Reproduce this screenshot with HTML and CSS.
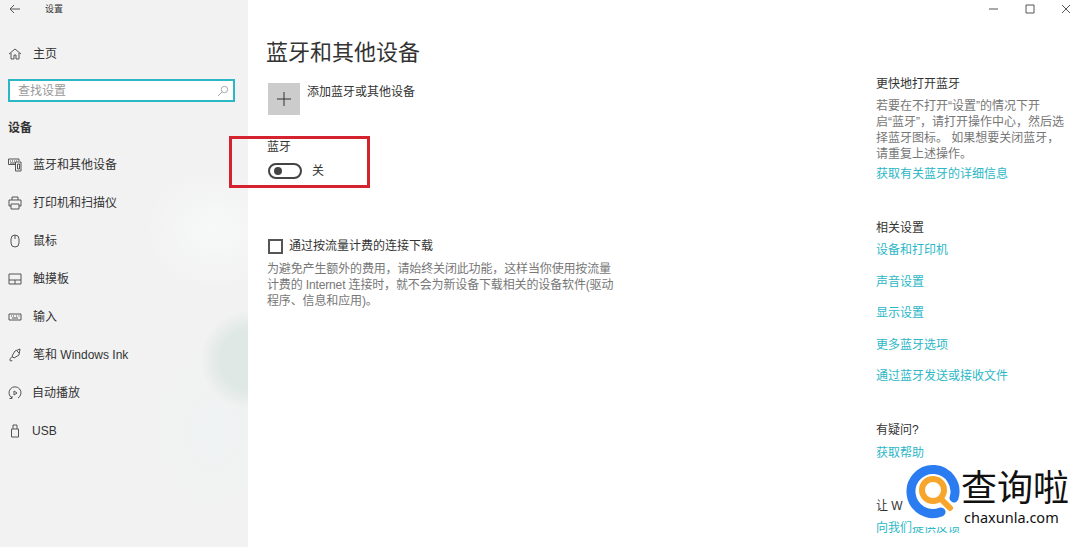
FILE: index.html
```html
<!DOCTYPE html>
<html lang="zh-CN">
<head>
    <meta charset="UTF-8">
    <meta name="viewport" content="width=device-width, initial-scale=1.0">
    <title>设置</title>
    <link rel="stylesheet" href="styles.css">
</head>
<body>
    <div class="app">
        <!-- Left navigation -->
        <aside class="sidebar">
            <div class="titlebar">
                <svg class="back" width="12" height="10" viewBox="0 0 12 10"><path d="M11 5H1M5 1L1 5l4 4"/></svg>
                <span>设置</span>
            </div>
            <a class="home">
                <svg class="icon" viewBox="0 0 14 14"><path d="M1 7l6-5 6 5M3 6v6h3V8h2v4h3V6"/></svg>
                <span>主页</span>
            </a>
            <div class="search">
                <span>查找设置</span>
                <svg width="12" height="12" viewBox="0 0 12 12"><circle cx="7.5" cy="4.5" r="3.2"/><path d="M5 7l-4 4"/></svg>
            </div>
            <h2 class="nav-title">设备</h2>
            <nav>
                <a class="nav-item">
                    <svg class="icon" viewBox="0 0 14 14"><path d="M8 6.500H0.500V1H11v2M2 3h1M4 3h1M6 3h1M8 3h1M2 5h5M7.500 4h5.500v9H7.500zM9.500 6h2v5h-2z"/></svg>
                    <span>蓝牙和其他设备</span>
                </a>
                <a class="nav-item">
                    <svg class="icon" viewBox="0 0 14 14"><path d="M4 4V1h6v3M3 10H1V4h12v6h-2M3 8h8v5H3z"/></svg>
                    <span>打印机和扫描仪</span>
                </a>
                <a class="nav-item">
                    <svg class="icon" viewBox="0 0 14 14"><path d="M3 5a4 4 0 0 1 8 0v4a4 4 0 0 1-8 0zM7 1v4"/></svg>
                    <span>鼠标</span>
                </a>
                <a class="nav-item">
                    <svg class="icon" viewBox="0 0 14 14"><path d="M1 2h12v10H1zM1 8h12M7 8v4"/></svg>
                    <span>触摸板</span>
                </a>
                <a class="nav-item">
                    <svg class="icon" viewBox="0 0 14 14"><path d="M1 4h12v6H1zM3 6h1M5 6h1M8 6h1M10.500 6h1M4 8h6"/></svg>
                    <span>输入</span>
                </a>
                <a class="nav-item">
                    <svg class="icon" viewBox="0 0 14 14"><path d="M12 1L7 3 4 8l2 2 5-3zM9 3l2 2M5 9c-2 0-3 1-3 3 0 1.500 2 1.500 2 0"/></svg>
                    <span>笔和 Windows Ink</span>
                </a>
                <a class="nav-item tight-label">
                    <svg class="icon" viewBox="0 0 14 14"><path d="M4 12a6 6 0 1 1 6 0M4 10v2.500H1.500M6 5l3 2-3 2z"/></svg>
                    <span>自动播放</span>
                </a>
                <a class="nav-item tight-label">
                    <svg class="icon" viewBox="0 0 14 14"><path d="M3.500 5h7v8h-7zM5 5V1h4v4M6 3h0M8 3h0"/></svg>
                    <span>USB</span>
                </a>
            </nav>
        </aside>

        <div class="content">
            <div class="window-controls">
                <svg width="10" height="10" viewBox="0 0 10 10"><path d="M0 5h9"/></svg>
                <svg width="10" height="10" viewBox="0 0 10 10"><path d="M1 1h8v8H1z"/></svg>
                <svg width="10" height="10" viewBox="0 0 10 10"><path d="M1 1l8 8M9 1l-8 8"/></svg>
            </div>
            <div class="columns">
                <main class="main">
                    <h1>蓝牙和其他设备</h1>
                    <div class="add-row">
                        <div class="add-tile">
                            <svg width="14" height="14" viewBox="0 0 14 14"><path d="M7 0v14M0 7h14"/></svg>
                        </div>
                        <span>添加蓝牙或其他设备</span>
                    </div>
                    <div class="bt-label">蓝牙</div>
                    <div class="toggle-row">
                        <div class="toggle"><div class="knob"></div></div>
                        <span>关</span>
                    </div>
                    <div class="check-row">
                        <div class="checkbox"></div>
                        <span>通过按流量计费的连接下载</span>
                    </div>
                    <p class="hint">为避免产生额外的费用，请始终关闭此功能，这样当你使用按流量<br>计费的 Internet 连接时，就不会为新设备下载相关的设备软件(驱动<br>程序、信息和应用)。</p>
                </main>

                <aside class="related">
                    <h3>更快地打开蓝牙</h3>
                    <p>若要在不打开“设置”的情况下开<br>启“蓝牙”，请打开操作中心，然后选<br>择蓝牙图标。 如果想要关闭蓝牙，<br>请重复上述操作。</p>
                    <a class="link first">获取有关蓝牙的详细信息</a>

                    <h3 class="group">相关设置</h3>
                    <a class="link tight">设备和打印机</a>
                    <a class="link">声音设置</a>
                    <a class="link">显示设置</a>
                    <a class="link">更多蓝牙选项</a>
                    <a class="link">通过蓝牙发送或接收文件</a>

                    <h3 class="group help">有疑问?</h3>
                    <a class="link help-link">获取帮助</a>

                    <h3 class="group better">让 W</h3>
                    <a class="link tight">向我们提供反馈</a>
                </aside>
            </div>
        </div>
    </div>

    <!-- Red annotation drawn on the screenshot -->
    <div class="highlight"></div>

    <!-- Site watermark -->
    <div class="watermark">
        <svg width="58" height="58" viewBox="0 0 58 58">
            <path class="ring" d="M50 36A22 22 0 1 0 37 50"/>
            <circle class="lens" cx="29" cy="28" r="11"/>
            <path class="lens" d="M37 37l9 9"/>
        </svg>
        <div class="mark-text">
            <div class="mark-name">查询啦</div>
            <div class="mark-url">chaxunla.com</div>
        </div>
    </div>
</body>
</html>
```

FILE: styles.css
```css
* {
    box-sizing: border-box;
}

body {
    margin: 0;
    width: 1080px;
    height: 547px;
    overflow: hidden;
    position: relative;
    background-color: #fff;
    color: #333;
    font-family: "Liberation Sans", "Noto Sans CJK SC", sans-serif;
    font-size: 12px;
    line-height: 16px;
}

h1, h2, h3, p {
    margin: 0;
    font-size: 12px;
    font-weight: normal;
}

svg {
    fill: none;
    stroke: #555;
    stroke-width: 1;
    flex: none;
}

.app {
    display: flex;
    height: 547px;
}

/* sidebar */
.sidebar {
    width: 248px;
    flex: none;
    background-color: #f2f2f2;
    background-image:
        radial-gradient(circle at 250px 360px, #dde7e3 0, #dfe8e4 30px, rgba(242, 242, 242, 0) 50px),
        radial-gradient(ellipse 70px 60px at 215px 230px, #f7f8f8 0, rgba(242, 242, 242, 0) 100%),
        radial-gradient(ellipse 60px 80px at 215px 430px, #eff3f3 0, rgba(242, 242, 242, 0) 100%);
}

.titlebar {
    display: flex;
    align-items: center;
    height: 17px;
    padding-left: 9px;
    font-size: 9px;
}

.titlebar span {
    margin-left: 24px;
}

.home, .nav-item {
    display: flex;
    align-items: center;
    padding-left: 8px;
    height: 38px;
}

.home {
    margin-top: 17px;
    height: 40px;
}

.icon {
    width: 14px;
    height: 14px;
    margin-right: 11px;
}

.tight-label .icon {
    margin-right: 10px;
}

.search {
    display: flex;
    align-items: center;
    justify-content: space-between;
    width: 227px;
    height: 23px;
    margin: 5px 0 0 8px;
    padding: 0 4px 0 8px;
    background-color: #fff;
    border: 2px solid #2bb7c6;
    color: #999;
}

.search svg {
    stroke: #aaa;
}

.nav-title {
    margin: 18px 0 0 8px;
    font-weight: bold;
}

nav {
    margin-top: 10px;
}

/* main column */
.content {
    flex: 1;
}

.window-controls {
    display: flex;
    justify-content: flex-end;
    gap: 26px;
    height: 17px;
    padding: 4px 9px 0 0;
}

.columns {
    display: flex;
    padding-left: 19px;
}

.main {
    width: 610px;
    margin-left: -1px;
}

h1 {
    margin-top: 21px;
    font-size: 22px;
    line-height: 30px;
}

.add-row {
    display: flex;
    gap: 7px;
    margin: 15px 0 0 2px;
}

.add-row span {
    margin-top: 1px;
}

.add-tile {
    display: flex;
    align-items: center;
    justify-content: center;
    width: 32px;
    height: 32px;
    background-color: #ccc;
}

.add-tile svg {
    stroke: #333;
}

.bt-label {
    margin: 24px 0 0 1px;
}

.toggle-row {
    display: flex;
    align-items: center;
    gap: 10px;
    margin: 8px 0 0 2px;
}

.toggle {
    display: flex;
    align-items: center;
    width: 34px;
    height: 16px;
    padding-left: 4px;
    border: 2px solid #444;
    border-radius: 8px;
}

.knob {
    width: 8px;
    height: 8px;
    border-radius: 50%;
    background-color: #444;
}

.check-row {
    display: flex;
    align-items: center;
    gap: 6px;
    margin: 59px 0 0 2px;
}

.checkbox {
    width: 15px;
    height: 15px;
    border: 2px solid #555;
}

.hint {
    margin: 7px 0 0 1px;
    color: #777;
    letter-spacing: -0.14px;
}

/* right column */
.related {
    width: 190px;
    padding-top: 59px;
}

.related p {
    margin-top: 6px;
    color: #777;
    white-space: nowrap;
}

.link {
    display: block;
    color: #2bb7c6;
    margin-top: 15.500px;
}

.link.first {
    margin-top: 4px;
}

.link.tight {
    margin-top: 6px;
}

.link.help-link {
    margin-top: 7px;
}

.group {
    margin-top: 38px;
}

.group.help {
    margin-top: 38px;
}

.group.better {
    margin-top: 37px;
}

/* overlays */
.highlight {
    position: absolute;
    left: 229px;
    top: 136px;
    width: 141px;
    height: 52px;
    border: 3px solid #d4232f;
}

.watermark {
    position: absolute;
    left: 904px;
    top: 462px;
    width: 176px;
    height: 65px;
    display: flex;
}

/* white plate of the watermark, it hides the top of the feedback link */
.watermark::before {
    content: "";
    position: absolute;
    left: 8px;
    top: 0;
    right: 0;
    bottom: 0;
    background-color: #fff;
}

.watermark svg, .mark-text {
    position: relative;
}

.ring {
    stroke: #2b7cf0;
    stroke-width: 9;
    stroke-linecap: round;
}

.lens {
    stroke: #f7a52b;
    stroke-width: 6;
    stroke-linecap: round;
}

.mark-text {
    margin-left: -1px;
}

.mark-name {
    margin-top: 5px;
    font-family: "Liberation Serif", "Noto Sans CJK SC", serif;
    font-size: 36px;
    line-height: 44px;
    color: #111;
    white-space: nowrap;
}

.mark-url {
    margin: -3px 0 0 3px;
    font-family: "Noto Sans", sans-serif;
    font-size: 14.500px;
    line-height: 18px;
    color: #111;
}
```
